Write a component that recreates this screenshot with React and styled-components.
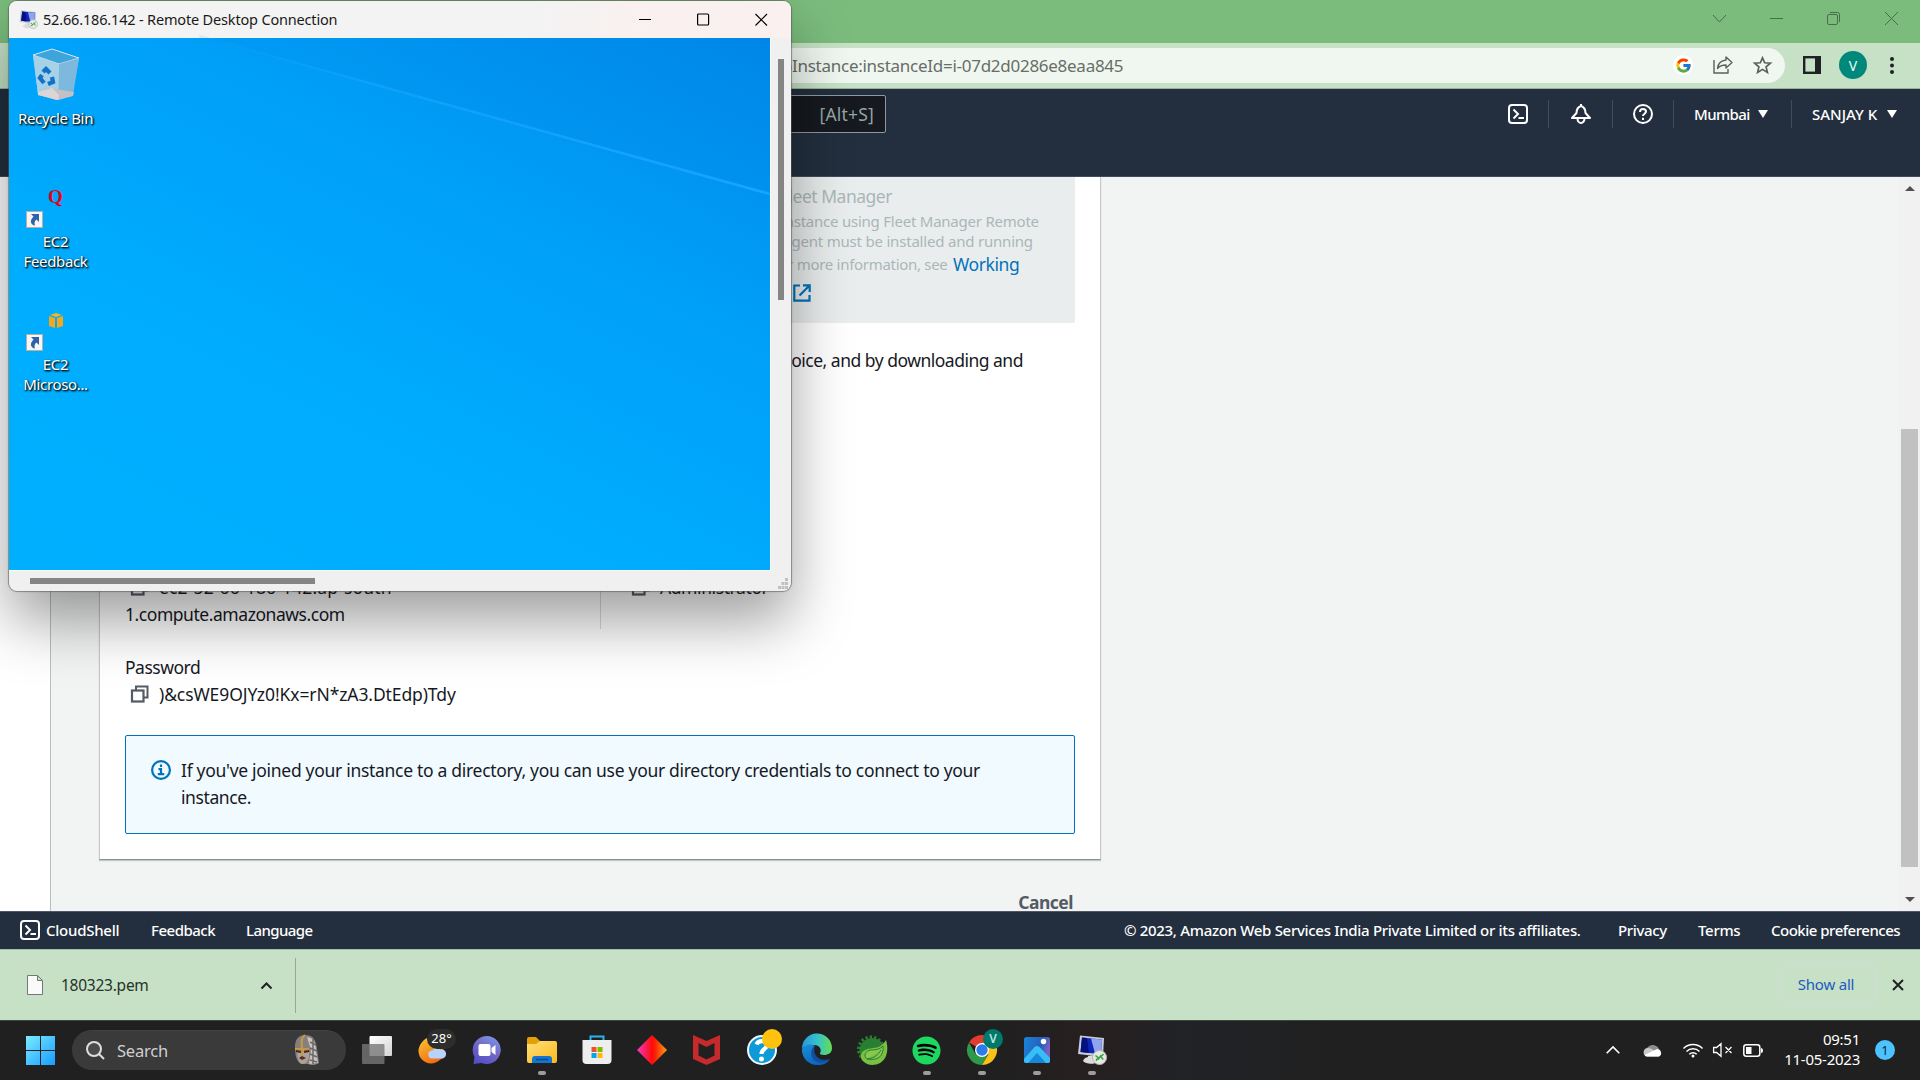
import React from 'react';
import styled, { createGlobalStyle, css } from 'styled-components';
import { FcGoogle } from 'react-icons/fc';
import { FaSpotify } from 'react-icons/fa';

const UI = '"Noto Sans", "Open Sans", sans-serif';

const GlobalStyle = createGlobalStyle`
  * { box-sizing: border-box; }
  html, body { margin: 0; padding: 0; overflow: hidden; }
  body { font-family: ${UI}; }
  svg { display: block; flex: none; overflow: visible; }
`;

const Screen = styled.div`
  position: relative;
  display: flex;
  flex-direction: column;
  width: 1920px;
  height: 1080px;
  overflow: hidden;
  background: #202020;
`;

const Text = styled.span`
  display: block;
  flex: none;
  white-space: nowrap;
  width: ${(p) => (p.$w ? `${p.$w}px` : 'auto')};
  margin-left: ${(p) => p.$left || 0}px;
  font-size: ${(p) => p.$size || 15}px;
  font-weight: ${(p) => p.$weight || 400};
  letter-spacing: ${(p) => p.$track || 0}px;
  color: ${(p) => p.$color || 'inherit'};
`;

/* ---------- browser chrome ---------- */

const TabStrip = styled.header`
  flex: none;
  display: flex;
  align-items: center;
  justify-content: flex-end;
  gap: 44px;
  height: 43px;
  padding: 0 22px 6px 0;
  background: #7bbc7d;
  svg:last-child { margin-left: 1px; }
`;

const Toolbar = styled.div`
  flex: none;
  display: flex;
  align-items: center;
  height: 46px;
  padding: 0 26px 1px 0;
  background: #c6e1c6;
  border-bottom: 1px solid #9ab19d;
`;

const Omnibox = styled.div`
  display: flex;
  align-items: center;
  width: 1685px;
  height: 35px;
  margin-left: 100px;
  padding: 0 13px 0 682px;
  border-radius: 18px;
  background: #f0f7f0;
  color: #686d68;
`;

const OmniActions = styled.div`
  display: flex;
  align-items: center;
  gap: 20px;
  margin-left: auto;
`;

const GoogleBadge = styled.span`
  display: grid;
  place-items: center;
  width: 20px;
  height: 20px;
  border-radius: 50%;
  background: #fff;
`;

const ToolbarActions = styled.div`
  display: flex;
  align-items: center;
  margin-left: auto;
`;

const Avatar = styled.span`
  display: grid;
  place-items: center;
  width: 28px;
  height: 28px;
  margin: 0 23px 0 18px;
  border-radius: 50%;
  background: #00897b;
  color: #e8fffb;
  font-size: 14px;
`;

/* ---------- console ---------- */

const NavBar = styled.nav`
  flex: none;
  display: flex;
  align-items: flex-start;
  height: 88px;
  background: #232f3e;
  border-bottom: 1px solid #414c5a;
  color: #fff;
`;

const ConsoleSearch = styled.div`
  display: flex;
  align-items: center;
  justify-content: flex-end;
  width: 486px;
  height: 38px;
  margin: 6px 0 0 400px;
  padding: 0 11px 1px 0;
  border: 1px solid #8d9aa0;
  border-radius: 2px;
  background: #16191f;
  color: #95a5a6;
`;

const NavTools = styled.div`
  display: flex;
  align-items: center;
  height: 50px;
  margin-left: auto;
`;

const NavCell = styled.div`
  display: flex;
  align-items: center;
  justify-content: ${(p) => (p.$start ? 'flex-start' : 'center')};
  width: ${(p) => p.$w}px;
  height: 28px;
  padding-left: ${(p) => (p.$start ? 20 : 0)}px;
  border-left: ${(p) => (p.$bar ? '1px solid #414c5a' : '0')};
`;

const Caret = styled.i`
  width: 0;
  height: 0;
  border: 5px solid transparent;
  border-top: 8px solid #fff;
  border-bottom: 0;
`;

const Viewport = styled.div`
  flex: none;
  display: flex;
  height: 734px;
  overflow: hidden;
`;

const SideRail = styled.aside`
  flex: none;
  width: 51px;
  background: #fff;
  border-right: 1px solid #b8bebe;
`;

const Main = styled.main`
  flex: 1;
  display: flex;
  flex-direction: column;
  align-items: flex-start;
  padding-left: 48px;
  background: #f2f3f3;
`;

const Card = styled.section`
  flex: none;
  width: 1002px;
  height: 683px;
  padding: 0 25px;
  background: #fff;
  border: 1px solid #c3c9cb;
  border-top: 0;
  border-bottom-color: #879196;
  box-shadow: 0 1px 1px rgba(0, 28, 36, 0.2);
  color: #16191f;
`;

const Tile = styled.div`
  width: 950px;
  height: 146px;
  margin-bottom: 24px;
  padding: 5px 0 0 656px;
  border-radius: 0 0 2px 2px;
  background: #eaeded;
  color: #aab7b8;
`;

const TileLine = styled.div`
  display: flex;
  align-items: center;
  height: ${(p) => p.$h}px;
  padding-left: ${(p) => p.$indent || 0}px;
`;

const Paragraph = styled.div`
  height: 27px;
  line-height: 27px;
  padding-left: 648px;
`;

const Details = styled.div`
  display: flex;
  height: 56px;
  margin-top: 199px;
`;

const DetailColumn = styled.div`
  width: 476px;
  padding-left: ${(p) => (p.$second ? 31 : 0)}px;
  border-left: ${(p) => (p.$second ? '1px solid #d5dbdb' : '0')};
`;

const Field = styled.div`
  padding-top: ${(p) => p.$top || 0}px;
`;

const Line = styled.div`
  display: flex;
  align-items: center;
  gap: 11px;
  height: 27px;
  padding-left: ${(p) => (p.$icon ? 6 : 0)}px;
`;

const Alert = styled.div`
  display: flex;
  align-items: flex-start;
  gap: 10px;
  width: 950px;
  height: 99px;
  margin-top: 28px;
  padding: 20px 25px;
  border: 1px solid #0073bb;
  border-radius: 2px;
  background: #f1faff;
  svg { margin-top: 4px; }
`;

const Actions = styled.div`
  display: flex;
  justify-content: flex-end;
  width: 1002px;
  padding: 33px 28px 0 0;
  line-height: 18px;
`;

const ScrollTrack = styled.div`
  flex: none;
  display: flex;
  flex-direction: column;
  align-items: center;
  width: 21px;
  height: 734px;
  padding: 9px 0 9px;
  background: #f1f1f1;
`;

const ScrollArrow = styled.i`
  width: 0;
  height: 0;
  border: 5px solid transparent;
  ${(p) => (p.$up
    ? css`border-bottom-color: #505050; border-top: 0; `
    : css`border-top-color: #505050; border-bottom: 0; margin-top: auto;`)}
`;

const ScrollThumb = styled.div`
  width: 17px;
  height: 438px;
  margin-top: 238px;
  background: #c1c1c1;
`;

const Footer = styled.footer`
  flex: none;
  display: flex;
  align-items: center;
  height: 38px;
  padding: 0 0 2px 20px;
  background: #232f3e;
  border-top: 1px solid #4e5866;
  color: #fff;
`;

const FooterLegal = styled.div`
  display: flex;
  width: 796px;
  margin-left: auto;
`;

/* ---------- downloads ---------- */

const Shelf = styled.div`
  flex: none;
  display: flex;
  align-items: center;
  height: 71px;
  padding-right: 16px;
  background: #c6e1c6;
  border-top: 1px solid #a5bfa9;
`;

const DownloadItem = styled.div`
  display: flex;
  align-items: center;
  width: 296px;
  height: 55px;
  padding: 0 23px 0 27px;
  border-right: 1px solid #93ab95;
`;

const ShowAll = styled.button`
  width: 98px;
  height: 40px;
  margin: 0 16px 2px auto;
  padding: 0 2px 0 0;
  border: 1px solid #d3d9dc;
  border-radius: 5px;
  background: transparent;
  color: #2458c0;
  font: 15px ${UI};
  letter-spacing: -0.2px;
`;

/* ---------- taskbar ---------- */

const Taskbar = styled.div`
  flex: none;
  display: flex;
  align-items: center;
  height: 60px;
  padding: 0 0 1px 26px;
  border-top: 1px solid #414341;
  background: linear-gradient(90deg, #202020 0 1000px, #271f1f 1090px, #212327 1180px, #202020 1330px);
`;

const StartGrid = styled.div`
  display: grid;
  grid-template-columns: 14px 14px;
  grid-auto-rows: 14px;
  gap: 1px;
  background: linear-gradient(135deg, #7cebff, #169cff);
  position: relative;
`;

const GridCross = styled.i`
  position: absolute;
  inset: 0;
  background:
    linear-gradient(#202020, #202020) center / 1px 100% no-repeat,
    linear-gradient(#202020, #202020) center / 100% 1px no-repeat;
`;

const SearchPill = styled.div`
  display: flex;
  align-items: center;
  width: 274px;
  height: 40px;
  margin: 0 3px 0 17px;
  padding: 0 26px 1px 14px;
  border-radius: 20px;
  background: #3a3a3a;
  border-top: 1px solid #424242;
  color: #d0d0d0;
  svg:last-child { margin-left: auto; }
`;

const AppSlot = styled.div`
  position: relative;
  display: flex;
  align-items: center;
  justify-content: center;
  width: 55px;
  height: 58px;
`;

const RunningMark = styled.i`
  position: absolute;
  left: 24px;
  bottom: 4px;
  width: 8px;
  height: 4px;
  border-radius: 2px;
  background: #9d9d9d;
`;

const TempBadge = styled.span`
  position: absolute;
  left: 23px;
  top: 8px;
  width: 29px;
  height: 20px;
  border-radius: 10px;
  background: #2d2d2d;
  color: #fff;
  text-align: center;
  font-size: 13px;
  line-height: 19px;
`;

const ProfileBadge = styled.span`
  position: absolute;
  left: 29px;
  top: 8px;
  width: 20px;
  height: 20px;
  border-radius: 50%;
  background: #00796b;
  color: #b7e5df;
  text-align: center;
  font-size: 12px;
  font-weight: 600;
  line-height: 20px;
`;

const NoticeDot = styled.span`
  position: absolute;
  left: 28px;
  top: 8px;
  width: 20px;
  height: 20px;
  border-radius: 50%;
  background: #ffc20e;
`;

const Tray = styled.div`
  display: flex;
  align-items: center;
  margin-left: auto;
  padding-right: 25px;
`;

const TrayIcon = styled.span`
  display: grid;
  place-items: center;
  width: ${(p) => p.$w}px;
`;

const Clock = styled.div`
  width: 85px;
  margin: 0 15px 2px 2px;
  text-align: right;
  color: #fff;
  font-size: 15px;
  line-height: 20px;
  letter-spacing: -0.25px;
`;

const Count = styled.span`
  display: grid;
  place-items: center;
  width: 20px;
  height: 20px;
  border-radius: 50%;
  background: #4cc2ff;
  color: #10202b;
  font-size: 12px;
`;

/* ---------- remote desktop window ---------- */

const RemoteWindow = styled.section`
  position: absolute;
  left: 8px;
  top: 0;
  display: flex;
  flex-direction: column;
  width: 784px;
  height: 592px;
  overflow: hidden;
  border: 1px solid rgba(90, 95, 90, 0.5);
  border-radius: 9px;
  background: #f0f0f0;
  background-clip: padding-box;
`;

const RemoteShadow = styled.div`
  position: absolute;
  left: 9px;
  top: 1px;
  width: 782px;
  height: 590px;
  border-radius: 9px;
  box-shadow: 0 30px 60px rgba(0, 0, 0, 0.38), 0 0 3px rgba(0, 0, 0, 0.25);
`;

const RemoteTitle = styled.div`
  flex: none;
  display: flex;
  align-items: center;
  height: 37px;
  padding: 0 23px 1px 10px;
  background: linear-gradient(90deg, #f3f3f3 0 520px, #faf0ef 640px);
  color: #1a1a1a;
`;

const TitleText = styled(Text)`
  padding-bottom: 1px;
`;

const CaptionButtons = styled.div`
  display: flex;
  gap: 45px;
  margin-left: auto;
`;

const RemoteBody = styled.div`
  display: flex;
  height: 533px;
`;

const RemoteDesktop = styled.div`
  position: relative;
  flex: none;
  width: 762px;
  height: 533px;
  border-right: 1px solid #fff;
  border-bottom: 1px solid #fff;
  background: linear-gradient(27deg, #00b0ff 0%, #00acfe 36%, #00a0f8 66%, #0088e9 100%);
`;

const Ray = styled.svg`
  position: absolute;
  left: 0;
  top: 0;
`;

const IconColumn = styled.div`
  position: relative;
  display: flex;
  flex-direction: column;
  width: 93px;
  padding-top: 6px;
`;

const DesktopIcon = styled.div`
  position: relative;
  display: flex;
  flex-direction: column;
  align-items: center;
  height: 123px;
`;

const IconArt = styled.div`
  display: grid;
  place-items: center;
  height: 60px;
  margin-bottom: 4px;
`;

const ShortcutMark = styled.svg`
  position: absolute;
  left: 17px;
  top: 44px;
`;

const QMark = styled.b`
  color: #e3001b;
  font: 700 19px/24px "Liberation Serif", serif;
`;

const DesktopLabel = styled.span`
  text-align: center;
  white-space: pre-line;
  font-size: 15px;
  line-height: 20px;
  letter-spacing: -0.35px;
  color: #fff;
  text-shadow: 1px 1px 2px #000, 1px 1px 2px rgba(0, 0, 0, 0.8);
`;

const VScroll = styled.div`
  width: 20px;
  padding: 21px 0 0 7px;
`;

const VThumb = styled.div`
  width: 6px;
  height: 241px;
  background: #858585;
`;

const HScroll = styled.div`
  display: flex;
  align-items: flex-start;
  justify-content: space-between;
  height: 20px;
  padding: 7px 3px 0 21px;
`;

const HThumb = styled.div`
  width: 285px;
  height: 6px;
  background: #858585;
`;

/* ---------- drawings ---------- */

const ShellIcon = () => (
  <svg width="20" height="20" viewBox="0 0 20 20" fill="none" stroke="#fff" strokeWidth="2">
    <rect x="1" y="1" width="18" height="18" rx="3" />
    <path d="M5.500 5.500 10 10 5.500 14.500M10.500 14h5.500" />
  </svg>
);

const BellIcon = () => (
  <svg width="20" height="20" viewBox="1 0 20 20" fill="none" stroke="#fff" strokeWidth="2" strokeLinejoin="round">
    <path d="M11 2C8 3 6.500 5 6.500 9L2 14H20L15.500 9C15.500 5 14 3 11 2zM11 0v3" />
    <path d="M7.500 14.500a3.500 4.500 0 0 0 7 0" />
  </svg>
);

const HelpIcon = () => (
  <svg width="20" height="20" viewBox="0 0 20 20" fill="none" stroke="#fff" strokeWidth="2">
    <circle cx="10" cy="10" r="9" />
    <path d="M7 8c0-2 1.200-3 3-3s3 1.100 3 2.600c0 2-3 2.200-3 4.400" />
    <path d="M10 13.800v2.200" />
  </svg>
);

const CopyIcon = () => (
  <svg width="17" height="18" viewBox="0 0 17 18" fill="none" stroke="#545b64" strokeWidth="2">
    <rect x="1" y="5.500" width="11.500" height="11" strokeWidth="2.200" />
    <path d="M5 5.500V1.500h11.500v11H13" />
  </svg>
);

const ExternalIcon = () => (
  <svg width="18" height="18" viewBox="0 0 18 18" fill="none" stroke="#0073bb" strokeWidth="2.200">
    <path d="M7 1.500H1.300v15.200H16.500V11M10 1.300h6.700V8M16.500 1.500 6.500 11.500" />
  </svg>
);

const InfoIcon = () => (
  <svg width="20" height="20" viewBox="0 0 20 20" fill="none" stroke="#0073bb" strokeWidth="2.200">
    <circle cx="10" cy="10" r="8.900" />
    <path d="M10 4.500V7M7.500 9.200H10V14M6.800 14.200h6.400" />
  </svg>
);

const RemoteIcon = ({ size }) => (
  <svg width={size} height={size} viewBox="0 0 30 30">
    <path d="M11 21l7-1 3 7c-4 2.500-12 2.500-15-1 1-3 3-3.500 5-4z" fill="#dcdcdc" />
    <path d="M3 .5 27 3l-1 19L1 19z" fill="#c9ccd4" />
    <path d="M5 2.500 25 4.500l-1 14.700L3.500 17z" fill="#1026b8" />
    <path d="M14 3.500 25 4.500l-1 14.700-6-.7z" fill="#8fa4ee" />
    <path d="M5 2.500 10 3l2 15-8.500-1z" fill="#05117e" />
    <circle cx="22.500" cy="22.500" r="7" fill="#e6e8e4" stroke="#b4b8b4" />
    <path d="m18.500 20.500 2.700 2.200-2.200 3M26.500 19l-2.700 2.700 2.500 2.800M21 24.500l3-4" stroke="#3aa23a" strokeWidth="1.500" fill="none" />
  </svg>
);

const ChromeCaption = () => (
  <>
    <svg width="13" height="13" viewBox="0 0 13 13" fill="none" stroke="#466f49"><path d="M0 3l6.500 7L13 3" /></svg>
    <svg width="13" height="13" viewBox="0 0 13 13" stroke="#466f49"><path d="M0 6.500h13" /></svg>
    <svg width="13" height="13" viewBox="0 0 13 13" fill="none" stroke="#466f49"><rect x=".5" y="2.500" width="10" height="10" rx="1.500" /><path d="M3 .5h7.500a2 2 0 0 1 2 2V10" /></svg>
    <svg width="13" height="13" viewBox="0 0 13 13" stroke="#466f49"><path d="M0 0l13 13M13 0 0 13" /></svg>
  </>
);

const ShareIcon = () => (
  <svg width="20" height="18" viewBox="0 0 20 18" fill="none" stroke="#5b605b" strokeWidth="1.400">
    <path d="M1 4v13h14v-4" />
    <path d="M13 1l6 5.500-6 5.500V9C9 9 6.500 10 4.500 12.500 5 8 8 4.500 13 4z" strokeLinejoin="round" />
  </svg>
);

const StarIcon = () => (
  <svg width="19" height="18" viewBox="0 0 19 18" fill="none" stroke="#5b605b" strokeWidth="1.700">
    <path d="M9.500 1.800l2.200 5 5.700.4-4.300 3.700 1.300 5.500-4.900-3-4.900 3 1.300-5.500L1.600 7.200l5.700-.4z" />
  </svg>
);

const PanelIcon = () => (
  <svg width="18" height="18" viewBox="0 0 18 18"><rect x="1.200" y="1.200" width="15.600" height="15.600" fill="none" stroke="#202124" strokeWidth="2.400" /><path d="M12 1h6v16h-6z" fill="#202124" /></svg>
);

const DotsIcon = () => (
  <svg width="4" height="17" viewBox="0 0 4 17" fill="#202124"><circle cx="2" cy="2" r="2" /><circle cx="2" cy="8.500" r="2" /><circle cx="2" cy="15" r="2" /></svg>
);

const BinIcon = () => (
  <svg width="48" height="53" viewBox="0 0 48 53">
    <path d="M1 7 20 1l27 9-7 37-16 5L6 46z" fill="#9acde8" />
    <path d="M1 7 20 1l27 9-20 6z" fill="#3ea5dc" stroke="#d3e4ec" />
    <path d="M27 16 47 10l-6 37-15 5z" fill="#7db9dc" />
    <path d="M1 7l26 9-1 36L6 46z" fill="#a6d2e8" />
    <path d="M6 44 17 40l25 4-1 4-15 4L6 47z" fill="#c5bfc7" />
    <path d="m20 40 7 7-1 5L6 47v-3z" fill="#dcd5d8" />
    <g fill="none" stroke="#1273c8" strokeWidth="4.300">
      <path d="M11 24l3-3 4 4" /><path d="M20 29l1 5-5 2" /><path d="M12 35l-4-5 2-3" />
    </g>
  </svg>
);

const CubeIcon = () => (
  <svg width="14" height="15" viewBox="0 0 14 15">
    <path d="M7 0l6 2-6 2-6-2z" fill="#f7b51e" /><path d="M0 3l6 2v10l-6-2zM14 3 8 5v10l6-2z" fill="#f5a81b" />
  </svg>
);

const Shortcut = () => (
  <ShortcutMark width="17" height="17" viewBox="0 0 17 17">
    <rect x=".5" y=".5" width="16" height="16" fill="#f6f6f6" stroke="#b4b0a8" />
    <path d="M5 3h8v8l-2.500-2.500C8.500 10 8 12 9 14.500 5 14 3 10 7.500 5.500z" fill="#2f62a8" />
  </ShortcutMark>
);

const KnightIcon = () => (
  <svg width="27" height="32" viewBox="0 0 27 32">
    <path d="M2 13C2 5 6 1 12 1c9 0 11 6 12 14l2 14c-5 3-9 2-11 1H8C3 27 2 20 2 13z" fill="#85807c" />
    <path d="M14 3c8 1 9 8 9 14l2 12-9 1 2-14z" fill="#c9c5c2" />
    <path d="M17 8l6 3M17 14l7 3M17 20l7 3M20 5v25M17 26l7 2" stroke="#6e6866" strokeWidth="1.500" />
    <path d="M4 15c3-1 8-1 12 0v8c-1 4-3 7-7 7-4-2-5-7-5-15z" fill="#aaa29b" />
    <path d="M12 1C7 5 9 10 9 16v6M2 15h14" stroke="#c29a48" strokeWidth="2.200" fill="none" />
    <path d="M3 17l5 1M11 18l5-1" stroke="#3a2420" strokeWidth="2" /><path d="M6 24l3-2 4 2-4 2z" fill="#5c2c20" />
    <path d="M4 16l4 1M11 17l4-1" stroke="#b33a2c" />
  </svg>
);

const TaskViewIcon = () => (
  <svg width="30" height="28" viewBox="0 0 30 28">
    <defs><linearGradient id="tv" x2="1" y2="1"><stop stopColor="#fff" /><stop offset="1" stopColor="#d4d4d4" /></linearGradient></defs>
    <rect x="7.500" width="22.500" height="20" rx="1" fill="url(#tv)" />
    <rect y="8" width="22.500" height="20" rx="1" fill="#777" fillOpacity=".8" />
  </svg>
);

const WeatherIcon = () => (
  <svg width="28" height="28" viewBox="0 0 28 28">
    <defs><linearGradient id="moon" x2=".6" y2="1"><stop stopColor="#f9c531" /><stop offset="1" stopColor="#f26b12" /></linearGradient></defs>
    <path d="M9 2A12.800 12.800 0 1 0 25 21C18 23 9 14 9 2z" fill="url(#moon)" />
    <circle cx="13" cy="15" r="12.500" fill="url(#moon)" />
    <path d="M14 22.500a4 4 0 0 1 .5-8 5 5 0 0 1 8-1 4.600 4.600 0 0 1 2 9z" fill="#b7d3fa" />
  </svg>
);

const ChatIcon = () => (
  <svg width="30" height="30" viewBox="0.500 0 30 30">
    <defs><linearGradient id="chat" x1=".9" x2=".3" y2="1"><stop stopColor="#7d9cee" /><stop offset=".5" stopColor="#7469c5" /><stop offset="1" stopColor="#5350c8" /></linearGradient></defs>
    <path d="M15 1a14 14 0 1 1-5 27l-8 1 1-7A14 14 0 0 1 15 1z" fill="url(#chat)" />
    <rect x="7" y="9" width="12" height="12" rx="2" fill="#fff" /><path d="M20 13l4-3v10l-4-3z" fill="#fff" />
  </svg>
);

const FolderIcon = () => (
  <svg width="30" height="27" viewBox="0 0 30 27">
    <defs><linearGradient id="fold" x2="1" y2="1"><stop stopColor="#ffdf78" /><stop offset="1" stopColor="#fbb91c" /></linearGradient></defs>
    <path d="M0 2q0-2 2-2h7l4 4h10v6H0z" fill="#e3a008" />
    <path d="M0 7h9l4-3h15q2 0 2 2v18q0 2-2 2H2q-2 0-2-2z" fill="url(#fold)" />
    <path d="M5 26v-4q0-3 3-3h14q3 0 3 3v4z" fill="#1275cf" /><path d="M9 22.500h12" stroke="#084b93" strokeWidth="1.500" />
  </svg>
);

const StoreIcon = () => (
  <svg width="30" height="30" viewBox="0 0 30 30">
    <path d="M8.500 6V1.500h13V6" fill="none" stroke="#28b4ee" strokeWidth="2" />
    <path d="M.5 5h29v20q0 4-4 4h-21q-4 0-4-4z" fill="#eeeeee" />
    <path d="M9.500 12h5v5h-5z" fill="#f25022" /><path d="M15.500 12h5v5h-5z" fill="#7fba00" /><path d="M9.500 18h5v5h-5z" fill="#00a4ef" /><path d="M15.500 18h5v5h-5z" fill="#ffb900" />
  </svg>
);

const DiamondIcon = () => (
  <svg width="30" height="30" viewBox="0 0 30 30">
    <defs><linearGradient id="dia"><stop stopColor="#f03cc8" /><stop offset=".5" stopColor="#ff0a0a" /><stop offset=".6" stopColor="#fb1f06" /><stop offset="1" stopColor="#ffa012" /></linearGradient></defs>
    <path d="M15 0l15 15-15 15L0 15z" fill="url(#dia)" />
  </svg>
);

const ShieldIcon = () => (
  <svg width="27" height="30" viewBox="0 0 27 30">
    <path d="M0 0l13.500 6L27 0v24l-13.500 6L0 24zM5.500 8v12.500l8 4 8-4V8l-8 4z" fill="#c62a2c" fillRule="evenodd" />
  </svg>
);

const QuestionIcon = () => (
  <svg width="30" height="30" viewBox="0 0 30 30">
    <circle cx="15" cy="15" r="14" fill="#0c9ad8" stroke="#f3f8fb" strokeWidth="2" />
    <path d="M9.500 9.500C11 5 20 5 20 10c0 4-5.500 4-5.500 9" fill="none" stroke="#fff" strokeWidth="4.200" /><circle cx="14.500" cy="24" r="2.500" fill="#fff" />
  </svg>
);

const EdgeIcon = () => (
  <svg width="30" height="30" viewBox="0 0 30 30">
    <defs>
      <linearGradient id="ed1"><stop stopColor="#2897d8" /><stop offset=".5" stopColor="#35c1ce" /><stop offset="1" stopColor="#67de50" /></linearGradient>
      <linearGradient id="ed2" x2=".6" y2="1"><stop stopColor="#1b90dc" /><stop offset="1" stopColor="#0b63b8" /></linearGradient>
    </defs>
    <path d="M0 14A15 15 0 0 1 30 13c0 5-4 7-8 7-3 0-4.500-1-4-2 2-3 0-8-6-8-6 0-11 2-12 4z" fill="url(#ed1)" />
    <path d="M0 14C4 8 10 9 13 11c-4 2-4 8-1 12s10 5 16 1c-4 6-9 6-13 6A15 15 0 0 1 0 14z" fill="url(#ed2)" />
    <path d="M13 11c-4 2-5 8-2 13 4 5 12 4 17 0-6 2-13 0-15-5-1-3-1-6 0-8z" fill="#104f9e" />
  </svg>
);

const SpringIcon = () => (
  <svg width="30" height="30" viewBox="0 0 30 30">
    <circle cx="14" cy="14.500" r="12.500" fill="none" stroke="#287f32" strokeWidth="3" strokeDasharray="2.400 2" />
    <circle cx="15" cy="15.500" r="12.500" fill="#287f32" />
    <path d="M29 5C33 18 28 30 15 30 10 30 6 27 4 23c-1-8 6-9 12-10 6 0 10-3 13-8z" fill="#78bf42" />
    <path d="M26 11c1 10-5 15-16 13-4-3-2-8 4-9 6 0 9-1 12-4zM10 24c8-1 11-4 14-9" fill="#86c94e" stroke="#287f32" strokeWidth="1" />
  </svg>
);

const ChromeIcon = () => (
  <svg width="30" height="30" viewBox="0 0 30 30">
    <path d="M15 15 2 7.500A15 15 0 0 1 28 7.500H15z" fill="#e23c30" />
    <path d="M15 15 8.500 19 2 7.500A15 15 0 0 0 15 30l6-11z" fill="#2c9a48" />
    <path d="M15 15l6.500 4L15 30A15 15 0 0 0 28 7.500H15z" fill="#fbc116" />
    <circle cx="15" cy="15" r="7" fill="#fff" /><circle cx="15" cy="15" r="5.700" fill="#2c7bea" />
  </svg>
);

const PhotosIcon = () => (
  <svg width="26" height="26" viewBox="0 0 26 26">
    <defs><linearGradient id="ph" x2="1" y2=".3"><stop stopColor="#1984dd" /><stop offset=".7" stopColor="#275fb8" /><stop offset="1" stopColor="#7d5fc2" /></linearGradient></defs>
    <rect width="26" height="26" rx="2.500" fill="url(#ph)" />
    <path d="M0 22 10.500 10q2.500-2 5 0L26 21v3q0 2-2 2H2q-2 0-2-2z" fill="#38bdf6" />
    <path d="M4 26 13 16l9 10z" fill="#1687d9" /><circle cx="19.500" cy="4.500" r="2.700" fill="#fff" />
  </svg>
);

const CloudIcon = () => (
  <svg width="20" height="14" viewBox="0 0 20 14">
    <path d="M4 5a7 7 0 0 1 12 1l-6 6H3z" fill="#8e8e8e" /><path d="M4 13.500A4.300 4.300 0 0 1 5 5c4 0 7 3 11 8.500z" fill="#c9c9c9" /><path d="M1.500 12 14 6a4 4 0 0 1 2 7.500H4q-1.500 0-2.500-1.500z" fill="#fff" />
  </svg>
);

const WifiIcon = () => (
  <svg width="20" height="15" viewBox="0 0 20 15" fill="none" stroke="#fff" strokeWidth="1.500">
    <path d="M.5 5.500a13.500 13.500 0 0 1 19 0M3.500 8.500a9.300 9.300 0 0 1 13 0M6.300 11.300a5.300 5.300 0 0 1 7.400 0" /><circle cx="10" cy="13" r="1.500" fill="#fff" stroke="none" />
  </svg>
);

const MuteIcon = () => (
  <svg width="20" height="14" viewBox="0 0 20 14" fill="none" stroke="#fff" strokeWidth="1.300">
    <path d="M.6 4.500v5h3L8 13.300V.7L3.600 4.500zM12.500 4l6 6M18.500 4l-6 6" />
  </svg>
);

const BatteryIcon = () => (
  <svg width="20" height="13" viewBox="0 0 20 13">
    <rect x=".8" y=".8" width="16" height="11.400" rx="2.500" fill="none" stroke="#fff" strokeWidth="1.500" /><rect x="3" y="3" width="5.500" height="7" fill="#fff" /><path d="M18 4q2 0 2 2.500T18 9z" fill="#fff" />
  </svg>
);

const FileIcon = () => (
  <svg width="16" height="20" viewBox="0 0 16 20" fill="#fafafa" stroke="#767676"><path d="M.5.500h10l5 5v14H.5zM10.500.500v5h5" /></svg>
);

const SearchIcon = () => (
  <svg width="19" height="19" viewBox="0 0 19 19" fill="#4b4b4b" stroke="#dedede" strokeWidth="2"><circle cx="8" cy="8" r="7" /><path d="M13 13l5 5" /></svg>
);

const SpotifyDisc = styled(FaSpotify)`
  background: radial-gradient(#000 62%, transparent 63%);
`;

const ShelfChevron = styled.svg`
  margin-left: auto;
`;

/* ---------- page ---------- */

const taskbarApps = [
  { id: 'views', art: <TaskViewIcon /> },
  { id: 'weather', art: <WeatherIcon />, badge: <TempBadge>28°</TempBadge> },
  { id: 'chat', art: <ChatIcon /> },
  { id: 'files', art: <FolderIcon />, running: true },
  { id: 'store', art: <StoreIcon /> },
  { id: 'diamond', art: <DiamondIcon /> },
  { id: 'shield', art: <ShieldIcon /> },
  { id: 'question', art: <QuestionIcon />, badge: <NoticeDot /> },
  { id: 'edge', art: <EdgeIcon /> },
  { id: 'spring', art: <SpringIcon /> },
  { id: 'spotify', art: <SpotifyDisc size={29} color="#1ed760" />, running: true },
  { id: 'chrome', art: <ChromeIcon />, badge: <ProfileBadge>V</ProfileBadge>, running: true },
  { id: 'photos', art: <PhotosIcon />, running: true },
  { id: 'remote', art: <RemoteIcon size={30} />, running: true },
];

const Browser = () => (
  <>
    <TabStrip><ChromeCaption /></TabStrip>
    <Toolbar>
      <Omnibox>
        <Text $size={17} $track={-0.27}>oInstance:instanceId=i-07d2d0286e8eaa845</Text>
        <OmniActions>
          <GoogleBadge><FcGoogle size={17} /></GoogleBadge>
          <ShareIcon />
          <StarIcon />
        </OmniActions>
      </Omnibox>
      <ToolbarActions>
        <PanelIcon />
        <Avatar>V</Avatar>
        <DotsIcon />
      </ToolbarActions>
    </Toolbar>
  </>
);

const ConsoleNav = () => (
  <NavBar>
    <ConsoleSearch><Text $size={17.5} $track={0.2}>[Alt+S]</Text></ConsoleSearch>
    <NavTools>
      <NavCell $w={60}><ShellIcon /></NavCell>
      <NavCell $w={64} $bar><BellIcon /></NavCell>
      <NavCell $w={61} $bar><HelpIcon /></NavCell>
      <NavCell $w={118} $bar $start><Text $w={64} $size={15} $weight={500} $track={-0.6}>Mumbai</Text><Caret /></NavCell>
      <NavCell $w={129} $bar $start><Text $w={75} $size={15} $weight={500} $track={0}>SANJAY K</Text><Caret /></NavCell>
    </NavTools>
  </NavBar>
);

const ConnectPage = () => (
  <Viewport>
    <SideRail />
    <Main>
      <Card>
        <Tile>
          <TileLine $h={27}><Text $left={-1} $size={17.5} $track={-0.5}>Fleet Manager</Text></TileLine>
          <TileLine $h={23}><Text $size={15} $track={-0.23}>instance using Fleet Manager Remote</Text></TileLine>
          <TileLine $h={18}><Text $left={1} $size={15} $track={-0.2}>Agent must be installed and running</Text></TileLine>
          <TileLine $h={28}>
            <Text $left={-10} $w={182} $size={15} $track={-0.3}>For more information, see</Text>
            <Text $size={17.5} $track={-0.4} $color="#0073bb">Working</Text>
          </TileLine>
          <TileLine $h={29} $indent={12}><ExternalIcon /></TileLine>
        </Tile>
        <Paragraph><Text $size={17.5} $track={-0.5}>choice, and by downloading and</Text></Paragraph>
        <Details>
          <DetailColumn>
            <Line $icon><CopyIcon /><Text $size={17.5} $track={0.15}>ec2-52-66-186-142.ap-south-</Text></Line>
            <Line><Text $size={17.5} $track={-0.45}>1.compute.amazonaws.com</Text></Line>
          </DetailColumn>
          <DetailColumn $second>
            <Line><CopyIcon /><Text $size={17.5} $track={-0.4}>Administrator</Text></Line>
          </DetailColumn>
        </Details>
        <Field $top={24}>
          <Line><Text $size={17.5} $track={-0.5}>Password</Text></Line>
          <Line $icon><CopyIcon /><Text $size={17.5} $track={-0.1}>)&amp;csWE9OJYz0!Kx=rN*zA3.DtEdp)Tdy</Text></Line>
        </Field>
        <Alert>
          <InfoIcon />
          <div>
            <Line><Text $size={17.5} $track={-0.3}>If you've joined your instance to a directory, you can use your directory credentials to connect to your</Text></Line>
            <Line><Text $size={17.5} $track={-0.4}>instance.</Text></Line>
          </div>
        </Alert>
      </Card>
      <Actions><Text $size={17.5} $weight={700} $track={-0.5} $color="#545b64">Cancel</Text></Actions>
    </Main>
    <ScrollTrack>
      <ScrollArrow $up />
      <ScrollThumb />
      <ScrollArrow />
    </ScrollTrack>
  </Viewport>
);

const ConsoleFooter = () => (
  <Footer>
    <ShellIcon />
    <Text $left={6} $w={105} $weight={500} $track={-0.25}>CloudShell</Text>
    <Text $w={95} $weight={500} $track={-0.5}>Feedback</Text>
    <Text $weight={500} $track={-0.6}>Language</Text>
    <FooterLegal>
      <Text $w={494} $weight={500} $track={-0.31}>© 2023, Amazon Web Services India Private Limited or its affiliates.</Text>
      <Text $w={80} $weight={500} $track={-0.35}>Privacy</Text>
      <Text $w={73} $weight={500} $track={-0.3}>Terms</Text>
      <Text $weight={500} $track={-0.5}>Cookie preferences</Text>
    </FooterLegal>
  </Footer>
);

const DownloadShelf = () => (
  <Shelf>
    <DownloadItem>
      <FileIcon />
      <Text $left={18} $size={15.5} $track={-0.25} $color="#27332a">180323.pem</Text>
      <ShelfChevron width="11" height="7" viewBox="0 0 11 7" fill="none" stroke="#202124" strokeWidth="2"><path d="M.5 6.500l5-5 5 5" /></ShelfChevron>
    </DownloadItem>
    <ShowAll>Show all</ShowAll>
    <svg width="12" height="12" viewBox="0 0 12 12" stroke="#202124" strokeWidth="2"><path d="M1 1l10 10M11 1 1 11" /></svg>
  </Shelf>
);

const WindowsTaskbar = () => (
  <Taskbar>
    <StartGrid><i /><i /><i /><i /><GridCross /></StartGrid>
    <SearchPill>
      <SearchIcon />
      <Text $left={12} $size={16.5} $track={-0.2}>Search</Text>
      <KnightIcon />
    </SearchPill>
    {taskbarApps.map((app) => (
      <AppSlot key={app.id}>
        {app.art}
        {app.badge}
        {app.running && <RunningMark />}
      </AppSlot>
    ))}
    <Tray>
      <TrayIcon $w={40}><svg width="14" height="8" viewBox="0 0 14 8" fill="none" stroke="#fff" strokeWidth="1.600"><path d="M.7 7.300 7 1l6.300 6.300" /></svg></TrayIcon>
      <TrayIcon $w={40}><CloudIcon /></TrayIcon>
      <TrayIcon $w={40}><WifiIcon /></TrayIcon>
      <TrayIcon $w={20}><MuteIcon /></TrayIcon>
      <TrayIcon $w={40}><BatteryIcon /></TrayIcon>
      <Clock><div>09:51</div><div>11-05-2023</div></Clock>
      <Count>1</Count>
    </Tray>
  </Taskbar>
);

const RemoteDesktopWindow = () => (
  <>
    <RemoteShadow />
    <RemoteWindow>
      <RemoteTitle>
        <RemoteIcon size={19} />
        <TitleText $left={5} $size={14.5} $track={-0.17}>52.66.186.142 - Remote Desktop Connection</TitleText>
        <CaptionButtons>
          <svg width="13" height="13" viewBox="0 0 13 13" stroke="#000"><path d="M0 6.500h12" /></svg>
          <svg width="13" height="13" viewBox="0 0 13 13" fill="none" stroke="#000" strokeWidth="1.200"><rect x=".6" y="1" width="11" height="11" rx="1" /></svg>
          <svg width="13" height="13" viewBox="0 0 13 13" stroke="#000" strokeWidth="1.200"><path d="M.5 1l11.500 11.500M12 1 .5 12.500" /></svg>
        </CaptionButtons>
      </RemoteTitle>
      <RemoteBody>
        <RemoteDesktop>
          <Ray width="761" height="532" viewBox="0 0 761 532">
            <defs><linearGradient id="ray"><stop stopColor="#18a8ff" stopOpacity="0.100" /><stop offset=".3" stopColor="#18a8ff" stopOpacity=".6" /><stop offset="1" stopColor="#18a4ff" /></linearGradient></defs>
            <path d="M190 0H761V156z" fill="#0074d0" fillOpacity=".07" />
            <path d="M190 -2 761 156" stroke="url(#ray)" strokeWidth="2.500" />
          </Ray>
          <IconColumn>
            <DesktopIcon><IconArt><BinIcon /></IconArt><DesktopLabel>Recycle Bin</DesktopLabel></DesktopIcon>
            <DesktopIcon><IconArt><QMark>Q</QMark></IconArt><Shortcut /><DesktopLabel>{'EC2\nFeedback'}</DesktopLabel></DesktopIcon>
            <DesktopIcon><IconArt><CubeIcon /></IconArt><Shortcut /><DesktopLabel>{'EC2\nMicroso...'}</DesktopLabel></DesktopIcon>
          </IconColumn>
        </RemoteDesktop>
        <VScroll><VThumb /></VScroll>
      </RemoteBody>
      <HScroll>
        <HThumb />
        <svg width="10" height="11" viewBox="0 0 10 11" fill="#c0c0c0"><path d="M7 0h3v3H7zM3.500 4h3v3h-3zM7 4h3v3H7zM0 8h3v3H0zM3.500 8h3v3h-3zM7 8h3v3H7z" /></svg>
      </HScroll>
    </RemoteWindow>
  </>
);

export default function App() {
  return (
    <>
      <GlobalStyle />
      <Screen>
        <Browser />
        <ConsoleNav />
        <ConnectPage />
        <ConsoleFooter />
        <DownloadShelf />
        <WindowsTaskbar />
        <RemoteDesktopWindow />
      </Screen>
    </>
  );
}
